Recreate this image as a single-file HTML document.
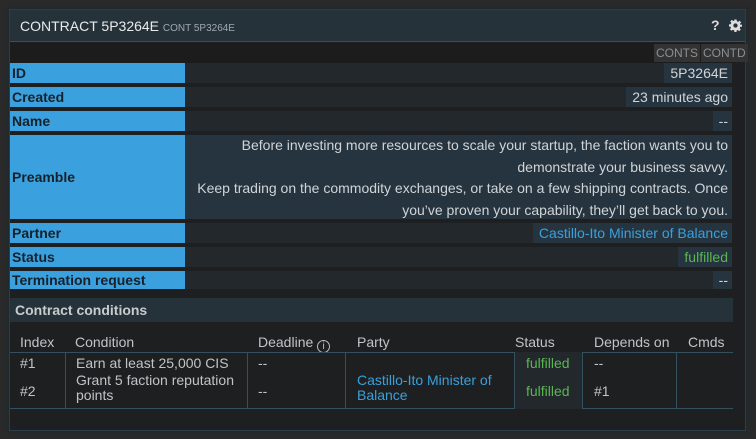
<!DOCTYPE html>
<html><head><style>
*{margin:0;padding:0;box-sizing:border-box}
body{width:756px;height:439px;background:#2a2a2a;font-family:"Liberation Sans","DejaVu Sans",sans-serif;font-size:14px;color:#d0d4d6;position:relative;overflow:hidden}
.win{position:absolute;left:9px;top:9px;width:737px;height:422px;background:#1e1f20;border:1px solid #2c3e48;box-shadow:0 0 6px #1a2a33}
.a{position:absolute}
.title{left:0;top:0;width:735px;height:32px;background:#26323a;border-bottom:1px solid #34505e}
.lbl{left:0;width:175px;background:#3ba0de;color:#16212a;font-weight:bold;padding-left:2px;line-height:20px}
.val{left:175px;width:547px;background:#23282c}
.pill{position:absolute;right:0;top:0;height:20px;line-height:20px;background:#263440;padding:0 4px 0 6px;white-space:nowrap}
</style></head><body>
<div class="win">
<div class="a title"><span class="a" style="left:10px;top:8px;font-size:14px;color:#e8eaeb">CONTRACT 5P3264E <span style="font-size:10px;color:#a0a8ad">CONT 5P3264E</span></span>
<span class="a" style="left:701px;top:7px;font-weight:bold;color:#ddd">?</span>
<svg class="a" style="left:719px;top:9px" width="13" height="13" viewBox="0 0 24 24"><path fill="#ddd" fill-rule="evenodd" d="M10 1h4l.6 3.2 2.2 1 2.7-1.9 2.8 2.8-1.9 2.7 1 2.2L24 10v4l-3.2.6-1 2.2 1.9 2.7-2.8 2.8-2.7-1.9-2.2 1L14 24h-4l-.6-3.2-2.2-1-2.7 1.9-2.8-2.8 1.9-2.7-1-2.2L0 14v-4l3.2-.6 1-2.2-1.9-2.7 2.8-2.8 2.7 1.9 2.2-1zM12 8a4 4 0 100 8 4 4 0 000-8z"/></svg></div>
<div class="a" style="left:0;top:33px;width:723px;height:20px;background:#1c1c1c"></div>
<div class="a" style="left:644px;top:34px;height:18px;line-height:18px;font-size:12px;color:#8a8f93;white-space:nowrap"><span style="background:#333;padding:0 2px;display:inline-block">CONTS</span><span style="background:#333;padding:0 2px;margin-left:1px;display:inline-block">CONTD</span></div>

<div class="a lbl" style="top:53px;height:20px">ID</div><div class="a val" style="top:53px;height:20px"><div class="pill">5P3264E</div></div>
<div class="a lbl" style="top:77px;height:20px">Created</div><div class="a val" style="top:77px;height:20px"><div class="pill">23 minutes ago</div></div>
<div class="a lbl" style="top:101px;height:20px">Name</div><div class="a val" style="top:101px;height:20px"><div class="pill">--</div></div>
<div class="a lbl" style="top:125px;height:84px;line-height:84px">Preamble</div><div class="a val" style="top:125px;height:84px;background:#263440;text-align:right;padding-right:4px;line-height:21.5px">Before investing more resources to scale your startup, the faction wants you to<br>demonstrate your business savvy.<br>Keep trading on the commodity exchanges, or take on a few shipping contracts. Once<br>you’ve proven your capability, they’ll get back to you.</div>
<div class="a lbl" style="top:213px;height:20px">Partner</div><div class="a val" style="top:213px;height:20px"><div class="pill" style="color:#3aa0dc">Castillo-Ito Minister of Balance</div></div>
<div class="a lbl" style="top:237px;height:20px">Status</div><div class="a val" style="top:237px;height:20px"><div class="pill" style="color:#5bb553">fulfilled</div></div>
<div class="a lbl" style="top:261px;height:18px;line-height:18px">Termination request</div><div class="a val" style="top:261px;height:18px"><div class="pill" style="height:18px;line-height:18px">--</div></div>

<div class="a" style="left:0;top:288px;width:723px;height:24px;background:#26323a;font-weight:bold;padding-left:5px;line-height:24px;color:#c8ccce">Contract conditions</div>
<div class="a" style="left:0;top:322px;width:723px;color:#c0c4c6">
<div class="a" style="top:0;left:10px;line-height:20px">Index</div>
<div class="a" style="top:0;left:65px;line-height:20px">Condition</div>
<div class="a" style="top:0;left:248px;line-height:20px;white-space:nowrap">Deadline <span style="display:inline-block;width:13px;height:13px;border:1px solid #bbb;border-radius:50%;font-size:10px;line-height:11px;text-align:center;vertical-align:-2px">i</span></div>
<div class="a" style="top:0;left:347px;line-height:20px">Party</div>
<div class="a" style="top:0;left:505px;line-height:20px">Status</div>
<div class="a" style="top:0;left:584px;line-height:20px">Depends on</div>
<div class="a" style="top:0;left:678px;line-height:20px">Cmds</div>
<div class="a" style="top:20px;left:0;width:723px;height:57px;border-top:1px solid #34505e;border-bottom:1px solid #34505e"></div>
<div class="a" style="top:20px;left:55px;width:1px;height:57px;background:#34505e"></div>
<div class="a" style="top:20px;left:237px;width:1px;height:57px;background:#34505e"></div>
<div class="a" style="top:20px;left:335px;width:1px;height:57px;background:#34505e"></div>
<div class="a" style="top:20px;left:504px;width:69px;height:57px;background:#23282c;border-left:1px solid #34505e;border-right:1px solid #34505e"></div>
<div class="a" style="top:20px;left:666px;width:1px;height:57px;background:#34505e"></div>
<div class="a" style="top:21px;left:10px;line-height:20px">#1</div>
<div class="a" style="top:21px;left:66px;line-height:20px">Earn at least 25,000 CIS</div>
<div class="a" style="top:21px;left:248px;line-height:20px">--</div>
<div class="a" style="top:21px;left:516px;line-height:20px;color:#5bb553">fulfilled</div>
<div class="a" style="top:21px;left:584px;line-height:20px">--</div>
<div class="a" style="top:49px;left:10px;line-height:20px">#2</div>
<div class="a" style="top:41px;left:66px;line-height:15px">Grant 5 faction reputation<br>points</div>
<div class="a" style="top:49px;left:248px;line-height:20px">--</div>
<div class="a" style="top:41px;left:347px;line-height:15px;color:#3aa0dc">Castillo-Ito Minister of<br>Balance</div>
<div class="a" style="top:49px;left:516px;line-height:20px;color:#5bb553">fulfilled</div>
<div class="a" style="top:49px;left:584px;line-height:20px">#1</div>
</div>
</div>
</body></html>
